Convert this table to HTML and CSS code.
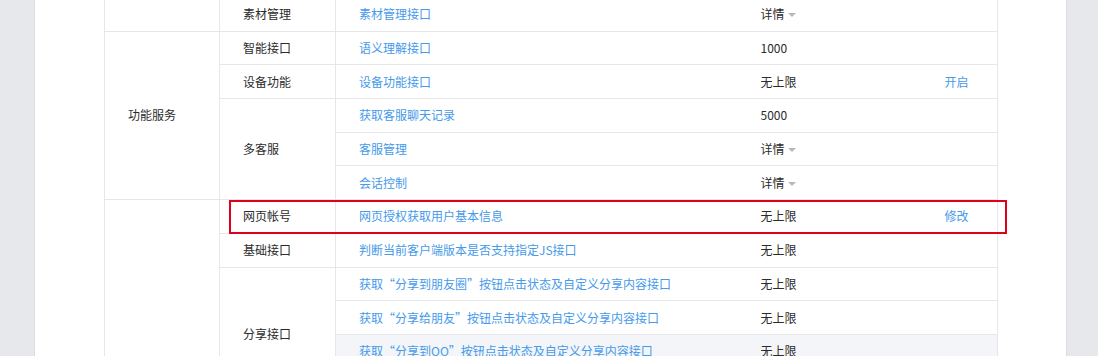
FILE: index.html
```html
<!DOCTYPE html>
<html lang="zh-CN">
<head>
  <meta charset="UTF-8" />
  <meta name="viewport" content="width=device-width, initial-scale=1.0"/>
  <title>接口权限</title>
  <link rel="stylesheet" href="styles.css">
</head>
<body>
  <div class="main-panel">
    <div class="table-wrap">
      <table class="auth-table">
        <colgroup>
          <col class="col-group">
          <col class="col-cat">
          <col class="col-name">
          <col class="col-quota">
          <col class="col-op">
        </colgroup>
        <tbody>
          <tr>
            <td class="group"></td>
            <td class="cat">素材管理</td>
            <td class="name"><a href="#">素材管理接口</a></td>
            <td class="quota"><span class="dropdown">详情<i class="caret"></i></span></td>
            <td class="op"></td>
          </tr>
          <tr>
            <td class="group" rowspan="5">功能服务</td>
            <td class="cat">智能接口</td>
            <td class="name"><a href="#">语义理解接口</a></td>
            <td class="quota">1000</td>
            <td class="op"></td>
          </tr>
          <tr>
            <td class="cat">设备功能</td>
            <td class="name"><a href="#">设备功能接口</a></td>
            <td class="quota">无上限</td>
            <td class="op"><a href="#">开启</a></td>
          </tr>
          <tr>
            <td class="cat" rowspan="3">多客服</td>
            <td class="name"><a href="#">获取客服聊天记录</a></td>
            <td class="quota">5000</td>
            <td class="op"></td>
          </tr>
          <tr>
            <td class="name"><a href="#">客服管理</a></td>
            <td class="quota"><span class="dropdown">详情<i class="caret"></i></span></td>
            <td class="op"></td>
          </tr>
          <tr>
            <td class="name"><a href="#">会话控制</a></td>
            <td class="quota"><span class="dropdown">详情<i class="caret"></i></span></td>
            <td class="op"></td>
          </tr>
          <tr>
            <td class="group" rowspan="6"></td>
            <td class="cat">网页帐号</td>
            <td class="name"><a href="#">网页授权获取用户基本信息</a></td>
            <td class="quota">无上限</td>
            <td class="op"><a href="#">修改</a></td>
          </tr>
          <tr>
            <td class="cat">基础接口</td>
            <td class="name"><a href="#">判断当前客户端版本是否支持指定JS接口</a></td>
            <td class="quota">无上限</td>
            <td class="op"></td>
          </tr>
          <tr>
            <td class="cat" rowspan="4">分享接口</td>
            <td class="name"><a href="#">获取“分享到朋友圈”按钮点击状态及自定义分享内容接口</a></td>
            <td class="quota">无上限</td>
            <td class="op"></td>
          </tr>
          <tr>
            <td class="name"><a href="#">获取“分享给朋友”按钮点击状态及自定义分享内容接口</a></td>
            <td class="quota">无上限</td>
            <td class="op"></td>
          </tr>
          <tr class="hover">
            <td class="name"><a href="#">获取“分享到QQ”按钮点击状态及自定义分享内容接口</a></td>
            <td class="quota">无上限</td>
            <td class="op"></td>
          </tr>
          <tr>
            <td class="name"><a href="#">获取“分享到腾讯微博”按钮点击状态及自定义分享内容接口</a></td>
            <td class="quota">无上限</td>
            <td class="op"></td>
          </tr>
        </tbody>
      </table>
      <!-- highlight frame around the web account row -->
      <div class="mark-box"></div>
    </div>
  </div>
</body>
</html>
```

FILE: styles.css
```css
body {
  margin: 0;
  background: #e7e8eb;
  font-family: "Noto Sans CJK SC", "Noto Sans", sans-serif;
  font-size: 12px;
  color: #2b2b2b;
}

a {
  color: #459ae9;
  text-decoration: none;
}

.main-panel {
  margin: 0 31px 0 34px;
  height: 356px;
  overflow: hidden;
  background: #fff;
  border-left: 1px solid #dcdde0;
  border-right: 1px solid #dcdde0;
  padding: 0 69px;
}

.table-wrap {
  position: relative;
  margin-top: -3px;
}

.auth-table {
  width: 893px;
  border-collapse: collapse;
  table-layout: fixed;
  border: 1px solid #e7e7eb;
}

.col-group { width: 115px; }
.col-cat { width: 116px; }
.col-name { width: 402px; }
.col-quota { width: 184px; }
.col-op { width: 76px; }

.auth-table tr {
  height: 33.7px;
}

.auth-table td {
  padding: 0 0 0 23px;
  border-bottom: 1px solid #e7e7eb;
  white-space: nowrap;
  line-height: 20px;
}

.group,
.cat {
  border-right: 1px solid #e7e7eb;
}

.hover .name,
.hover .quota,
.hover .op {
  background: #f4f5f9;
}

.dropdown {
  display: inline-flex;
  align-items: center;
}

.caret {
  display: inline-block;
  width: 0;
  height: 0;
  margin-left: 3px;
  margin-top: 2px;
  border-top: 4px solid #b8b8b8;
  border-left: 4px solid transparent;
  border-right: 4px solid transparent;
}

.mark-box {
  position: absolute;
  left: 125px;
  top: 203px;
  width: 778px;
  height: 34px;
  box-sizing: border-box;
  border: 2px solid #e0001b;
  pointer-events: none;
}
```
